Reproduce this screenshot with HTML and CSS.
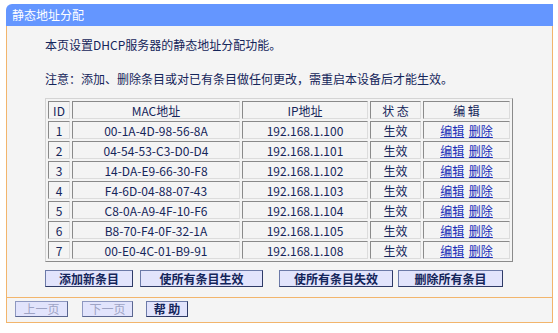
FILE: index.html
```html
<!DOCTYPE html>
<html>
    <head>
        <meta charset="utf-8">
        <title>静态地址分配</title>
        <link rel="stylesheet" href="styles.css">
    </head>
    <body>
        <div class="frame">
            <div class="title">静态地址分配</div>
            <div class="main">
                <p class="intro">本页设置DHCP服务器的静态地址分配功能。</p>
                <p class="note">注意：添加、删除条目或对已有条目做任何更改，需重启本设备后才能生效。</p>
                <table class="list">
                    <tr>
                        <td class="colId">ID</td>
                        <td class="colMac">MAC地址</td>
                        <td class="colIp">IP地址</td>
                        <td class="colState">状 态</td>
                        <td class="colEdit">编 辑</td>
                    </tr>
                    <tr><td>1</td><td>00-1A-4D-98-56-8A</td><td>192.168.1.100</td><td>生效</td><td><a href="#">编辑</a> <a href="#">删除</a></td></tr>
                    <tr><td>2</td><td>04-54-53-C3-D0-D4</td><td>192.168.1.101</td><td>生效</td><td><a href="#">编辑</a> <a href="#">删除</a></td></tr>
                    <tr><td>3</td><td>14-DA-E9-66-30-F8</td><td>192.168.1.102</td><td>生效</td><td><a href="#">编辑</a> <a href="#">删除</a></td></tr>
                    <tr><td>4</td><td>F4-6D-04-88-07-43</td><td>192.168.1.103</td><td>生效</td><td><a href="#">编辑</a> <a href="#">删除</a></td></tr>
                    <tr><td>5</td><td>C8-0A-A9-4F-10-F6</td><td>192.168.1.104</td><td>生效</td><td><a href="#">编辑</a> <a href="#">删除</a></td></tr>
                    <tr><td>6</td><td>B8-70-F4-0F-32-1A</td><td>192.168.1.105</td><td>生效</td><td><a href="#">编辑</a> <a href="#">删除</a></td></tr>
                    <tr><td>7</td><td>00-E0-4C-01-B9-91</td><td>192.168.1.108</td><td>生效</td><td><a href="#">编辑</a> <a href="#">删除</a></td></tr>
                </table>
                <div class="actions">
                    <button class="btn btnAdd">添加新条目</button>
                    <button class="btn btnOn">使所有条目生效</button>
                    <button class="btn btnOff">使所有条目失效</button>
                    <button class="btn btnDel">删除所有条目</button>
                </div>
            </div>
            <div class="foot">
                <button class="btn btnPrev" disabled>上一页</button>
                <button class="btn btnNext" disabled>下一页</button>
                <button class="btn btnHelp">帮 助</button>
            </div>
        </div>
    </body>
</html>
```

FILE: styles.css
```css
body {
    margin: 4px 5px 0 6px;
    background: white;
    font-family: "Noto Sans CJK SC", sans-serif;
    font-size: 12px;
    color: #14255a;
}
.frame {
    width: 547px;
}
.title {
    height: 22px;
    line-height: 21px;
    padding-left: 6px;
    background: #6496ff;
    color: white;
    font-size: 12px;
    border-top-left-radius: 6px;
}
.main {
    background: #f4f4f4;
    border-left: 1px solid #f2b56c;
    border-right: 1px solid #f2b56c;
    border-bottom: 1px solid #f2b56c;
    padding: 11px 38px 10px 38px;
}
.intro {
    margin: 0;
    line-height: 16px;
}
.note {
    margin: 18px 0 0 0;
    line-height: 16px;
}
.list {
    margin-top: 11px;
    width: 468px;
    table-layout: fixed;
    border-collapse: separate;
    border-spacing: 2px;
    border: 1px solid;
    border-color: #d4d4d4 #8a8a8a #8a8a8a #d4d4d4;
}
.list td {
    box-sizing: border-box;
    height: 18px;
    padding: 0;
    text-align: center;
    line-height: 15px;
    border: 1px solid;
    border-color: #8a8a8a #dcdcdc #dcdcdc #8a8a8a;
}
.list .colId { width: 22px; }
.list .colMac { width: 168px; }
.list .colIp { width: 126px; }
.list .colState { width: 51px; }
.list .colEdit { width: 87px; }
.list a {
    color: #1a2fb8;
    text-decoration: underline;
    margin: 0 1px;
}
.actions {
    display: flex;
    margin-top: 8px;
}
.btn {
    font-family: "Noto Sans CJK SC", sans-serif;
    font-size: 12px;
    font-weight: bold;
    color: #14255a;
    background: #e2e4fc;
    border: 1px solid;
    border-color: #6c7aa8 #2e3a66 #2e3a66 #6c7aa8;
    height: 17px;
    line-height: 14px;
    padding: 0;
    margin: 0;
}
.btnAdd { width: 88px; margin-right: 7px; }
.btnOn { width: 123px; margin-right: 16px; }
.btnOff { width: 114px; margin-right: 5px; }
.btnDel { width: 105px; }
.foot {
    display: flex;
    height: 25px;
    padding: 3px 0 0 8px;
    box-sizing: border-box;
    background: #f4f4f4;
    border-left: 1px solid #f2b56c;
    border-right: 1px solid #f2b56c;
    border-bottom: 1px solid #f2b56c;
}
.foot .btn {
    height: 16px;
}
.btn:disabled {
    color: #9ea3c4;
    font-weight: normal;
    border-color: #8e98c0 #5a6690 #5a6690 #8e98c0;
}
.btnPrev { width: 53px; margin-right: 14px; }
.btnNext { width: 51px; margin-right: 13px; }
.btnHelp { width: 42px; }
```
